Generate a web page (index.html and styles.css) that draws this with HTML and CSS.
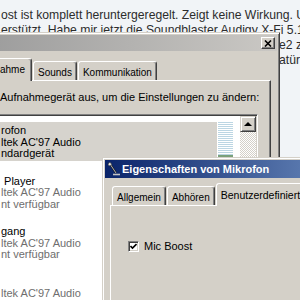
FILE: index.html
```html
<!DOCTYPE html>
<html lang="de">
<head>
    <meta charset="UTF-8">
    <meta name="viewport" content="width=device-width, initial-scale=1.0">
    <title>Mic Boost - Soundeinstellungen</title>
    <link rel="stylesheet" href="styles.css">
</head>
<body>
    <!-- Forumbeitrag im Hintergrund -->
    <div class="post">
        <p>ost ist komplett heruntergeregelt. Zeigt keine Wirkung. U</p>
        <p>erstützt. Habe mir jetzt die Soundblaster Audigy X-Fi 5.1</p>
        <p class="rest">e2 z</p>
        <p class="rest">atür</p>
    </div>

    <!-- Fenster: Sound -->
    <div class="win win-sound">
        <div class="titlebar inactive">
            <button class="close">
                <svg width="8" height="7" viewBox="0 0 8 7"><path d="M1 0.5 L7 6.5 M7 0.5 L1 6.5" stroke="#000" stroke-width="1.6"/></svg>
            </button>
        </div>
        <div class="body">
            <div class="tabs">
                <div class="tab active">ahme</div>
                <div class="tab">Sounds</div>
                <div class="tab">Kommunikation</div>
            </div>
            <div class="panel">
                <p class="hint">Aufnahmegerät aus, um die Einstellungen zu ändern:</p>
                <div class="listbox">
                    <ul class="devices">
                        <li class="device selected">
                            <div class="info">
                                <div class="name">rofon</div>
                                <div class="name">ltek AC'97 Audio</div>
                                <div class="name">ndardgerät</div>
                            </div>
                            <div class="meter"></div>
                        </li>
                        <li class="device">
                            <div class="info">
                                <div class="name">&nbsp;Player</div>
                                <div class="sub">ltek AC'97 Audio</div>
                                <div class="sub">nt verfügbar</div>
                            </div>
                            <div class="meter"></div>
                        </li>
                        <li class="device">
                            <div class="info">
                                <div class="name">gang</div>
                                <div class="sub">ltek AC'97 Audio</div>
                                <div class="sub">nt verfügbar</div>
                            </div>
                            <div class="meter"></div>
                        </li>
                        <li class="device">
                            <div class="info">
                                <div class="name"></div>
                                <div class="sub">ltek AC'97 Audio</div>
                                <div class="sub"></div>
                            </div>
                            <div class="meter"></div>
                        </li>
                    </ul>
                    <div class="scrollbar">
                        <div class="scroll-btn"></div>
                        <div class="track"></div>
                    </div>
                </div>
            </div>
        </div>
    </div>

    <!-- Fenster: Eigenschaften von Mikrofon -->
    <div class="win win-mic">
        <div class="titlebar active">
            <svg class="icon" width="14" height="14" viewBox="0 0 14 14">
                <path d="M3 2 L9 11" stroke="#1b1b1b" stroke-width="2"/>
                <path d="M3 2 L9 11" stroke="#d8d8d8" stroke-width="0.8"/>
                <circle cx="2.8" cy="2.2" r="1.6" fill="#e8e8e8" stroke="#333" stroke-width="0.6"/>
                <path d="M6 12.5 H13" stroke="#c4c4c4" stroke-width="1.6"/>
            </svg>
            <span class="title">Eigenschaften von Mikrofon</span>
        </div>
        <div class="body">
            <div class="tabs">
                <div class="tab">Allgemein</div>
                <div class="tab">Abhören</div>
                <div class="tab active">Benutzerdefiniert</div>
            </div>
            <div class="panel">
                <label class="check">
                    <span class="box">
                        <svg width="7" height="7" viewBox="0 0 7 7"><path d="M0.5 3 L2.5 5 L6.5 1" fill="none" stroke="#000" stroke-width="1.6"/></svg>
                    </span>
                    Mic Boost
                </label>
            </div>
        </div>
    </div>
</body>
</html>
```

FILE: styles.css
```css
* {
    box-sizing: border-box;
}

body {
    margin: 0;
    width: 300px;
    height: 300px;
    overflow: hidden;
    position: relative;
    background-color: #f1f4f7;
    font-family: "Liberation Sans", Arial, sans-serif;
}

/* Forumbeitrag */
.post {
    padding: 8px 0 0 1px;
    font-size: 12.2px;
    line-height: 15px;
    color: #2c2c2c;
    white-space: nowrap;
}

.post p {
    margin: 0;
}

.post .rest {
    padding-left: 278px;
}

/* Fenster (klassisches Design) */
.win {
    position: absolute;
    display: flex;
    flex-direction: column;
    background-color: #d4d0c8;
    border: 1px solid;
    border-color: #d4d0c8 #404040 #404040 #d4d0c8;
    box-shadow: inset 1px 1px #fff, inset -1px -1px #808080;
    padding: 2px;
}

.win-sound {
    left: -20px;
    top: 32px;
    width: 300px;
    height: 300px;
}

.win-mic {
    left: 102px;
    top: 157px;
    width: 400px;
    height: 200px;
}

.titlebar {
    display: flex;
    align-items: center;
    height: 16px;
    flex-shrink: 0;
}

.titlebar.inactive {
    background: linear-gradient(to right, #9c9c9c, #cac8c4);
}

.titlebar.active {
    height: 18px;
    padding-left: 2px;
    gap: 1px;
    background: linear-gradient(to right, #0a246a, #a6caf0);
    color: #fff;
    font-size: 11px;
    font-weight: bold;
    white-space: nowrap;
}

.close {
    margin-left: auto;
    margin-right: 2px;
    width: 14px;
    height: 12px;
    padding: 0;
    display: flex;
    align-items: center;
    justify-content: center;
    background-color: #d4d0c8;
    border: 1px solid;
    border-color: #fff #404040 #404040 #fff;
    box-shadow: inset -1px -1px #808080;
}

.body {
    flex: 1;
    display: flex;
    flex-direction: column;
}

.win-sound .body {
    padding: 0 6px;
}

.win-mic .body {
    padding: 0 5px;
}

/* Registerkarten */
.tabs {
    display: flex;
    align-items: flex-end;
    padding-left: 2px;
    margin-top: 7px;
    font-size: 10px;
    line-height: 12px;
    color: #000;
}

.win-mic .tabs {
    margin-top: 5px;
}

.tab {
    position: relative;
    padding: 5px 4px 1px;
    margin-left: 1px;
    background-color: #d4d0c8;
    border: 1px solid;
    border-bottom: 0;
    border-color: #fff #404040 transparent #fff;
    box-shadow: inset -1px 0 #808080;
    border-radius: 3px 3px 0 0;
    white-space: nowrap;
}

.tab:first-child {
    margin-left: 0;
}

.tab.active {
    padding-bottom: 5px;
    margin-bottom: -1px;
    z-index: 1;
}

.win-sound .tab.active {
    padding-left: 8px;
    padding-right: 6px;
}

.win-mic .tab.active {
    font-size: 10.5px;
}

.panel {
    flex: 1;
    font-size: 11px;
    color: #000;
    border: 1px solid;
    border-color: #fff #404040 #404040 #fff;
    box-shadow: inset -1px -1px #808080;
}

.win-sound .panel {
    padding: 10px 12px 0 10px;
}

.win-mic .panel {
    padding: 34px 17px 0;
}

.hint {
    margin: 0 0 10px;
    line-height: 13px;
    white-space: nowrap;
}

/* Geräteliste */
.listbox {
    display: flex;
    height: 200px;
    margin-left: -30px;
    padding: 1px;
    background-color: #fff;
    border: 1px solid;
    border-color: #808080 #fff #fff #808080;
    box-shadow: inset 1px 1px #404040, inset -1px -1px #d4d0c8;
}

.devices {
    flex: 1;
    list-style: none;
    margin: 0;
    padding: 6px 0 0;
}

.device {
    display: flex;
    align-items: flex-start;
    margin-bottom: 12px;
}

.info {
    flex: 1;
    padding: 3px 0 1px 29px;
    line-height: 11.5px;
    white-space: nowrap;
    overflow: hidden;
}

.info div {
    height: 11.5px;
}

.device.selected .info {
    background-color: #d6d3cd;
}

.sub {
    color: #6e6e6e;
}

.meter {
    width: 15px;
    height: 35px;
    margin: 0 7px 0 1px;
    background:
        linear-gradient(#7aa07a, #7aa07a) bottom / 100% 2px no-repeat,
        repeating-linear-gradient(to bottom, #bcd6e3 0 1px, #fff 1px 2px);
}

.scrollbar {
    width: 16px;
    flex-shrink: 0;
    display: flex;
    flex-direction: column;
}

.scroll-btn {
    height: 16px;
    display: flex;
    align-items: center;
    justify-content: center;
    background-color: #d4d0c8;
    border: 1px solid;
    border-color: #d4d0c8 #404040 #404040 #d4d0c8;
    box-shadow: inset 1px 1px #fff, inset -1px -1px #808080;
}

.scroll-btn::before {
    content: "";
    border: 4px solid transparent;
    border-top: 0;
    border-bottom-color: #000;
}

.track {
    flex: 1;
    background: repeating-conic-gradient(#fff 0 25%, #d4d0c8 0 50%) 0 0 / 2px 2px;
}

/* Kontrollkästchen */
.check {
    display: flex;
    align-items: center;
    gap: 5px;
    line-height: 13px;
}

.box {
    width: 11px;
    height: 11px;
    display: flex;
    align-items: center;
    justify-content: center;
    background-color: #fff;
    border: 1px solid;
    border-color: #808080 #fff #fff #808080;
    box-shadow: inset 1px 1px #404040, inset -1px -1px #d4d0c8;
}
```
